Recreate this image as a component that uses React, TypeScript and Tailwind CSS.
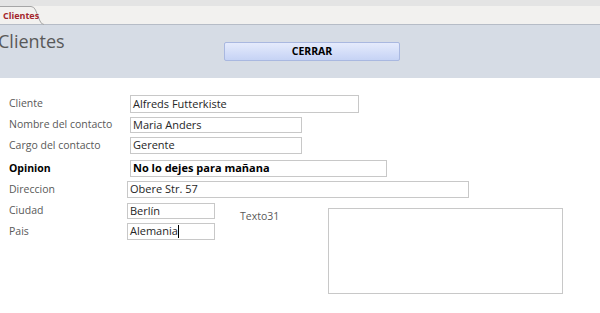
import React from "react";

const font = { fontFamily: '"Open Sans", "Noto Sans", sans-serif' };

function Field({
  label,
  value,
  labelW,
  inputW,
  h,
  bold,
  caret,
}: {
  label: string;
  value: string;
  labelW: string;
  inputW: string;
  h: string;
  bold?: boolean;
  caret?: boolean;
}) {
  return (
    <div className="flex items-center">
      <div
        className={`${labelW} pl-[9px] text-[10.5px] ${bold ? "font-bold text-black" : "text-[#595959]"}`}
      >
        {label}
      </div>
      <div
        className={`${inputW} ${h} border border-[#c8c8c8] bg-white flex items-center pl-[2px] text-[11px] ${bold ? "font-bold text-black" : "text-[#262626]"}`}
      >
        {value}
        {caret && <span className="inline-block w-px h-[13px] bg-black" />}
      </div>
    </div>
  );
}

export default function App() {
  return (
    <div className="w-[600px] h-[313px] bg-white overflow-hidden" style={font}>
      <div className="h-[6px] bg-[#e4e4e4]" />
      <div className="h-[18px] bg-[#f2f1ef] relative">
        <div className="absolute left-0 top-0 h-[19px] w-[44px]">
          <svg width="44" height="19" className="absolute left-0 top-0">
            <path d="M0 0.5 H31 Q34 0.5 35.5 4 L40 15 Q41.5 18.5 44 18.5" fill="#f2f1ef" stroke="#a6a6a6" strokeWidth="1" />
          </svg>
          <span className="absolute left-[3px] top-[3px] text-[9px] font-bold text-[#a4262c]">Clientes</span>
        </div>
      </div>
      <div className="h-px bg-[#b6bcc6]" />
      <div className="h-[53px] bg-[#d6dce5] flex items-start">
        <div className="w-[224px] shrink-0 pl-[1px] mt-[4px] text-[18px] text-[#595959] leading-[24px]">
          <span className="-ml-[3px]">Clientes</span>
        </div>
        <div className="mt-[17px] w-[176px] h-[19px] rounded-[2px] border border-[#a9b8e0] bg-gradient-to-b from-[#e5ebfc] to-[#c6d3f5] flex items-center justify-center text-[10.5px] font-bold text-black">
          CERRAR
        </div>
      </div>
      <div className="pt-[17px] flex flex-col">
        <Field label="Cliente" value="Alfreds Futterkiste" labelW="w-[130px]" inputW="w-[229px]" h="h-[18px]" />
        <div className="h-[4px]" />
        <Field label="Nombre del contacto" value="Maria Anders" labelW="w-[130px]" inputW="w-[172px]" h="h-[16px]" />
        <div className="h-[4px]" />
        <Field label="Cargo del contacto" value="Gerente" labelW="w-[130px]" inputW="w-[172px]" h="h-[17px]" />
        <div className="h-[6px]" />
        <Field label="Opinion" value="No lo dejes para mañana" labelW="w-[130px]" inputW="w-[257px]" h="h-[17px]" bold />
        <div className="h-[4px]" />
        <Field label="Direccion" value="Obere Str. 57" labelW="w-[127px]" inputW="w-[342px]" h="h-[17px]" />
        <div className="h-[5px]" />
        <div className="flex items-start">
          <div className="flex flex-col">
            <Field label="Ciudad" value="Berlín" labelW="w-[127px]" inputW="w-[88px]" h="h-[16px]" />
            <div className="h-[4px]" />
            <Field label="Pais" value="Alemania" labelW="w-[127px]" inputW="w-[88px]" h="h-[17px]" caret />
          </div>
          <div className="ml-[25px] mt-[6px] text-[10.5px] text-[#595959]">Texto31</div>
          <div className="ml-[49px] mt-[5px] w-[235px] h-[86px] border border-[#c8c8c8] bg-white" />
        </div>
      </div>
    </div>
  );
}
